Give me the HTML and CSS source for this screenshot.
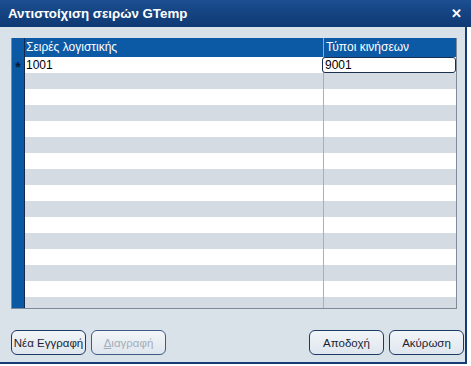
FILE: index.html
```html
<!DOCTYPE html>
<html lang="el">
<head>
<meta charset="utf-8">
<link rel="stylesheet" href="styles.css">
</head>
<body>
<div class="window">
  <div class="titlebar">
    <span class="title">Αντιστοίχιση σειρών GTemp</span>
    <span class="close">✕</span>
  </div>
  <div class="content">
    <div class="grid">
      <div class="row head">
        <div class="ind"></div>
        <div class="c1">Σειρές λογιστικής</div>
        <div class="c2">Τύποι κινήσεων</div>
      </div>
      <div class="row">
        <div class="ind star">*</div>
        <div class="c1">1001</div>
        <div class="c2"><div class="edit">9001</div></div>
      </div>
      <div class="row alt"><div class="ind"></div><div class="c1"></div><div class="c2"></div></div>
      <div class="row"><div class="ind"></div><div class="c1"></div><div class="c2"></div></div>
      <div class="row alt"><div class="ind"></div><div class="c1"></div><div class="c2"></div></div>
      <div class="row"><div class="ind"></div><div class="c1"></div><div class="c2"></div></div>
      <div class="row alt"><div class="ind"></div><div class="c1"></div><div class="c2"></div></div>
      <div class="row"><div class="ind"></div><div class="c1"></div><div class="c2"></div></div>
      <div class="row alt"><div class="ind"></div><div class="c1"></div><div class="c2"></div></div>
      <div class="row"><div class="ind"></div><div class="c1"></div><div class="c2"></div></div>
      <div class="row alt"><div class="ind"></div><div class="c1"></div><div class="c2"></div></div>
      <div class="row"><div class="ind"></div><div class="c1"></div><div class="c2"></div></div>
      <div class="row alt"><div class="ind"></div><div class="c1"></div><div class="c2"></div></div>
      <div class="row"><div class="ind"></div><div class="c1"></div><div class="c2"></div></div>
      <div class="row alt"><div class="ind"></div><div class="c1"></div><div class="c2"></div></div>
      <div class="row"><div class="ind"></div><div class="c1"></div><div class="c2"></div></div>
      <div class="row alt"><div class="ind"></div><div class="c1"></div><div class="c2"></div></div>
    </div>
    <div class="buttons">
      <div class="group">
        <button class="btn">Νέα Εγγραφή</button>
        <button class="btn disabled"><u>Δ</u>ιαγραφή</button>
      </div>
      <div class="group">
        <button class="btn">Αποδοχή</button>
        <button class="btn">Ακύρωση</button>
      </div>
    </div>
  </div>
</div>
</body>
</html>
```
FILE: styles.css
```css
html, body {
  margin: 0;
  padding: 0;
  background: #ffffff;
}
body {
  width: 471px;
  height: 366px;
  overflow: hidden;
  font-family: "Liberation Sans", Arial, sans-serif;
}
.window {
  width: 471px;
  height: 366px;
  display: flex;
  flex-direction: column;
}
.titlebar {
  height: 27px;
  flex: none;
  background: linear-gradient(to bottom, #1d4f92 0%, #164584 40%, #0f3a74 100%);
  display: flex;
  align-items: center;
  justify-content: space-between;
  padding: 0 8px;
  box-sizing: border-box;
}
.title {
  color: #ffffff;
  font-weight: bold;
  font-size: 13.3px;
}
.close {
  color: #ffffff;
  font-weight: bold;
  font-size: 13px;
  margin-right: 1px;
}
.content {
  width: 467px;
  height: 337px;
  box-sizing: border-box;
  background: #d9e1e9;
  border-right: 2px solid #163c78;
  border-bottom: 2px solid #163c78;
  padding: 11px 9px 0 11px;
  display: flex;
  flex-direction: column;
}
.grid {
  width: 446px;
  height: 271px;
  box-sizing: border-box;
  border: 1px solid #7f8b99;
  border-top: none;
  overflow: hidden;
  background: #ffffff;
}
.row {
  display: flex;
  height: 16px;
  background: #ffffff;
  font-size: 12px;
  line-height: 16px;
  color: #000;
}
.row.alt {
  background: #d4dbe3;
}
.row.head {
  height: 19px;
  line-height: 19px;
  background: #0c5aa6;
  color: #ffffff;
}
.ind {
  width: 12px;
  flex: none;
  background: #0a59a2;
  border-right: 1px solid #13294d;
  text-align: center;
}
.ind.star {
  color: #06183a;
  font-size: 14px;
  font-weight: bold;
  line-height: 20px;
}
.row.head .ind {
  background: #0c5aa6;
}
.c1 {
  width: 297px;
  flex: none;
  border-right: 1px solid #a7afb9;
  padding-left: 1px;
}
.row.head .c1 {
  border-right-color: #8fa9c8;
}
.c2 {
  flex: 1;
  position: relative;
}
.edit {
  position: absolute;
  left: -2px;
  top: 0;
  right: 0;
  height: 16px;
  box-sizing: border-box;
  border: 1px solid #1a2e50;
  border-radius: 3px;
  background: #fff;
  padding-left: 2px;
  line-height: 14px;
}
.row.head .c2 {
  padding-left: 2px;
}
.buttons {
  margin-top: 21px;
  display: flex;
  justify-content: space-between;
  width: 453px;
}
.group {
  display: flex;
  gap: 5px;
}
.btn {
  width: 75px;
  height: 25px;
  box-sizing: border-box;
  border: 1px solid #1c3a66;
  border-radius: 6px;
  background: linear-gradient(to bottom, #f2f5f8 0%, #dfe6ee 100%);
  font-family: "Liberation Sans", Arial, sans-serif;
  font-size: 11.5px;
  color: #1a2433;
  padding: 0;
}
.btn.disabled {
  color: #a3adb8;
  border-color: #3d5a85;
}
.btn u {
  text-decoration: underline;
}
```
